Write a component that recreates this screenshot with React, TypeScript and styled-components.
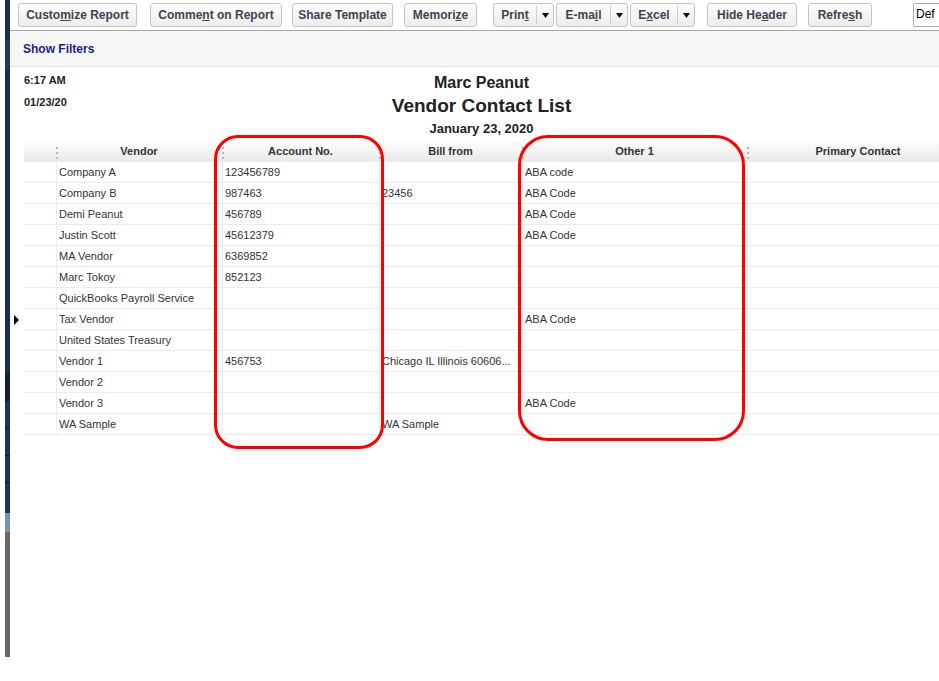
import React from "react";
import styled, { createGlobalStyle } from "styled-components";

const GlobalStyle = createGlobalStyle`
  html, body {
    margin: 0;
    padding: 0;
    background: #ffffff;
    overflow: hidden;
  }
  body {
    font-family: "Liberation Sans", Arial, sans-serif;
  }
`;

interface column {
  title: string,
  width: number
}

const columns: column[] = [
  { title: "", width: 32 },
  { title: "Vendor", width: 166 },
  { title: "Account No.", width: 157 },
  { title: "Bill from", width: 143 },
  { title: "Other 1", width: 225 },
  { title: "Primary Contact", width: 222 }
];

const rows: string[][] = [
  ["Company A", "123456789", "", "ABA code"],
  ["Company B", "987463", "23456", "ABA Code"],
  ["Demi Peanut", "456789", "", "ABA Code"],
  ["Justin Scott", "45612379", "", "ABA Code"],
  ["MA Vendor", "6369852", "", ""],
  ["Marc Tokoy", "852123", "", ""],
  ["QuickBooks Payroll Service", "", "", ""],
  ["Tax Vendor", "", "", "ABA Code"],
  ["United States Treasury", "", "", ""],
  ["Vendor 1", "456753", "Chicago IL Illinois 60606...", ""],
  ["Vendor 2", "", "", ""],
  ["Vendor 3", "", "", "ABA Code"],
  ["WA Sample", "", "WA Sample", ""]
];

const selectedRow = 7;

const sidebarParts = [
  { h: 40, c: "#1c2e46" },
  { h: 30, c: "#22395a" },
  { h: 303, c: "#1b2d45" },
  { h: 28, c: "#121f31" },
  { h: 27, c: "#1d3553" },
  { h: 1, c: "#0d1826" },
  { h: 26, c: "#1d3553" },
  { h: 1, c: "#0d1826" },
  { h: 26, c: "#1d3553" },
  { h: 1, c: "#0d1826" },
  { h: 30, c: "#1d3553" },
  { h: 19, c: "#7892ad" },
  { h: 125, c: "#666666" }
];

export default function App() {
  return (
    <>
      <GlobalStyle />
      <Page>
        <Sidebar>
          {sidebarParts.map((p, i) => (
            <SidebarPart key={i} $h={p.h} $c={p.c} />
          ))}
        </Sidebar>
        <Main>
          <Toolbar>
            <Button $w={119} $ml={8}>Custo<Key>m</Key>ize Report</Button>
            <Button $w={132} $ml={13}>Comme<Key>n</Key>t on Report</Button>
            <Button $w={101} $ml={10}>Share Template</Button>
            <Button $w={73} $ml={11}>Memori<Key>z</Key>e</Button>
            <Split $w={61} $ml={16}>
              <SplitLabel>Prin<Key>t</Key></SplitLabel>
              <SplitArrow><Caret /></SplitArrow>
            </Split>
            <Split $w={72} $ml={2}>
              <SplitLabel>E-ma<Key>i</Key>l</SplitLabel>
              <SplitArrow><Caret /></SplitArrow>
            </Split>
            <Split $w={65} $ml={2}>
              <SplitLabel>E<Key>x</Key>cel</SplitLabel>
              <SplitArrow><Caret /></SplitArrow>
            </Split>
            <Button $w={90} $ml={12}>Hide He<Key>a</Key>der</Button>
            <Button $w={64} $ml={11}>Refre<Key>s</Key>h</Button>
            <Select>Def</Select>
          </Toolbar>
          <FilterBar>
            <FilterLink>Show Filters</FilterLink>
          </FilterBar>
          <Report>
            <ReportHead>
              <Stamp>
                <StampLine>6:17 AM</StampLine>
                <StampLine $mt={9}>01/23/20</StampLine>
              </Stamp>
              <Titles>
                <Company>Marc Peanut</Company>
                <Title>Vendor Contact List</Title>
                <DateLine>January 23, 2020</DateLine>
              </Titles>
              <div />
            </ReportHead>
            <TableWrap>
              <Row>
                <Gutter />
                <HeaderCells>
                  {columns.map((c, i) => (
                    <HeaderCell key={i} $w={c.width}>
                      {i > 0 && <Grip />}
                      {c.title}
                    </HeaderCell>
                  ))}
                </HeaderCells>
              </Row>
              {rows.map((r, ri) => (
                <Row key={ri}>
                  <Gutter>{ri === selectedRow && <Pointer />}</Gutter>
                  <Cells>
                    {columns.map((c, ci) => (
                      <Cell key={ci} $w={c.width} $first={ci === 0}>
                        {ci === 0 ? "" : r[ci - 1] || ""}
                      </Cell>
                    ))}
                  </Cells>
                </Row>
              ))}
              <Mark $l={204} $t={-4} $w={170} $h={314} $r={24} />
              <Mark $l={508} $t={-4} $w={227} $h={306} $r={30} />
            </TableWrap>
          </Report>
        </Main>
      </Page>
    </>
  );
}

function Caret() {
  return (
    <svg width="7" height="5" viewBox="0 0 7 5">
      <path d="M0 0 H7 L3.5 5 Z" fill="#111" />
    </svg>
  );
}

const Page = styled.div`
  display: flex;
  width: 939px;
  height: 681px;
  overflow: hidden;
`;

const Sidebar = styled.div`
  flex: 0 0 5px;
  margin-left: 5px;
  display: flex;
  flex-direction: column;
`;

const SidebarPart = styled.div<{ $h: number, $c: string }>`
  height: ${p => p.$h}px;
  background: ${p => p.$c};
`;

const Main = styled.div`
  flex: 1;
  min-width: 0;
  display: flex;
  flex-direction: column;
  overflow: hidden;
`;

const Toolbar = styled.div`
  height: 30px;
  flex: 0 0 30px;
  display: flex;
  align-items: center;
  background: #ffffff;
  border-bottom: 1px solid #a6a6a6;
  white-space: nowrap;
`;

const Button = styled.button<{ $w: number, $ml: number }>`
  flex: 0 0 ${p => p.$w}px;
  width: ${p => p.$w}px;
  height: 24px;
  margin-left: ${p => p.$ml}px;
  padding: 0;
  border: 1px solid #c4c4c4;
  border-radius: 3px;
  background: linear-gradient(#fdfdfd, #ececec);
  font: bold 12px "Liberation Sans", Arial, sans-serif;
  color: #3d4450;
  text-align: center;
`;

const Key = styled.u`
  text-decoration: underline;
`;

const Split = styled.div<{ $w: number, $ml: number }>`
  flex: 0 0 ${p => p.$w}px;
  width: ${p => p.$w}px;
  height: 24px;
  box-sizing: border-box;
  margin-left: ${p => p.$ml}px;
  display: flex;
  align-items: center;
  border: 1px solid #c4c4c4;
  border-radius: 3px;
  background: linear-gradient(#fdfdfd, #ececec);
  font: bold 12px "Liberation Sans", Arial, sans-serif;
  color: #3d4450;
`;

const SplitLabel = styled.div`
  flex: 1;
  text-align: center;
`;

const SplitArrow = styled.div`
  flex: 0 0 16px;
  height: 18px;
  display: flex;
  align-items: center;
  justify-content: center;
  border-left: 1px solid #cdcdcd;
`;

const Select = styled.div`
  flex: 0 0 auto;
  height: 24px;
  box-sizing: border-box;
  margin-left: 41px;
  padding: 3px 0 0 2px;
  width: 60px;
  border: 1px solid #a9a9a9;
  border-radius: 2px;
  background: #ffffff;
  font: 12px "Liberation Sans", Arial, sans-serif;
  color: #000;
`;

const FilterBar = styled.div`
  height: 35px;
  flex: 0 0 35px;
  display: flex;
  align-items: center;
  padding-left: 13px;
  background: #f6f6f6;
  border-bottom: 1px solid #e4e4e4;
`;

const FilterLink = styled.span`
  font: bold 12px "Liberation Sans", Arial, sans-serif;
  color: #1d1d8a;
`;

const Report = styled.div`
  flex: 1;
  background: #ffffff;
`;

const ReportHead = styled.div`
  display: grid;
  grid-template-columns: 1fr auto 1fr;
  padding-left: 14px;
  height: 72px;
`;

const Stamp = styled.div`
  padding-top: 7px;
`;

const StampLine = styled.div<{ $mt?: number }>`
  margin-top: ${p => p.$mt || 0}px;
  font: bold 11px/13px "Liberation Sans", Arial, sans-serif;
  color: #222;
`;

const Titles = styled.div`
  display: flex;
  flex-direction: column;
  align-items: center;
  color: #222;
`;

const Company = styled.div`
  margin-top: 6px;
  font: bold 16px/19px "Liberation Sans", Arial, sans-serif;
`;

const Title = styled.div`
  margin-top: 1px;
  font: bold 19px/26px "Liberation Sans", Arial, sans-serif;
`;

const DateLine = styled.div`
  margin-top: 2px;
  font: bold 13px/16px "Liberation Sans", Arial, sans-serif;
`;

const TableWrap = styled.div`
  position: relative;
  width: 979px;
`;

const Row = styled.div`
  display: flex;
`;

const Gutter = styled.div`
  flex: 0 0 14px;
  display: flex;
  align-items: center;
  padding-left: 4px;
  box-sizing: border-box;
`;

const Pointer = styled.div`
  width: 0;
  height: 0;
  border-top: 5px solid transparent;
  border-bottom: 5px solid transparent;
  border-left: 5px solid #000;
`;

const HeaderCells = styled.div`
  display: flex;
  height: 23px;
  background: linear-gradient(#fefefe, #e9e9e9);
`;

const HeaderCell = styled.div<{ $w: number }>`
  position: relative;
  flex: 0 0 ${p => p.$w}px;
  display: flex;
  align-items: center;
  justify-content: center;
  font: bold 11px "Liberation Sans", Arial, sans-serif;
  color: #333;
`;

const Grip = styled.div`
  position: absolute;
  left: 0;
  top: 8px;
  width: 2px;
  height: 12px;
  background: repeating-linear-gradient(#b9b9b9 0 2px, transparent 2px 5px);
`;

const Cells = styled.div`
  display: flex;
  height: 20px;
  border-bottom: 1px solid #ebebeb;
`;

const Cell = styled.div<{ $w: number, $first: boolean }>`
  flex: 0 0 ${p => p.$w}px;
  box-sizing: border-box;
  display: flex;
  align-items: center;
  padding-left: 2px;
  border-left: ${p => (p.$first ? "none" : "1px solid #ededed")};
  font: 11px "Liberation Sans", Arial, sans-serif;
  color: #333;
  white-space: nowrap;
  overflow: hidden;
`;

const Mark = styled.div<{ $l: number, $t: number, $w: number, $h: number, $r: number }>`
  position: absolute;
  left: ${p => p.$l}px;
  top: ${p => p.$t}px;
  width: ${p => p.$w}px;
  height: ${p => p.$h}px;
  box-sizing: border-box;
  border: 3px solid #ff0000;
  border-radius: ${p => p.$r}px;
  pointer-events: none;
`;
